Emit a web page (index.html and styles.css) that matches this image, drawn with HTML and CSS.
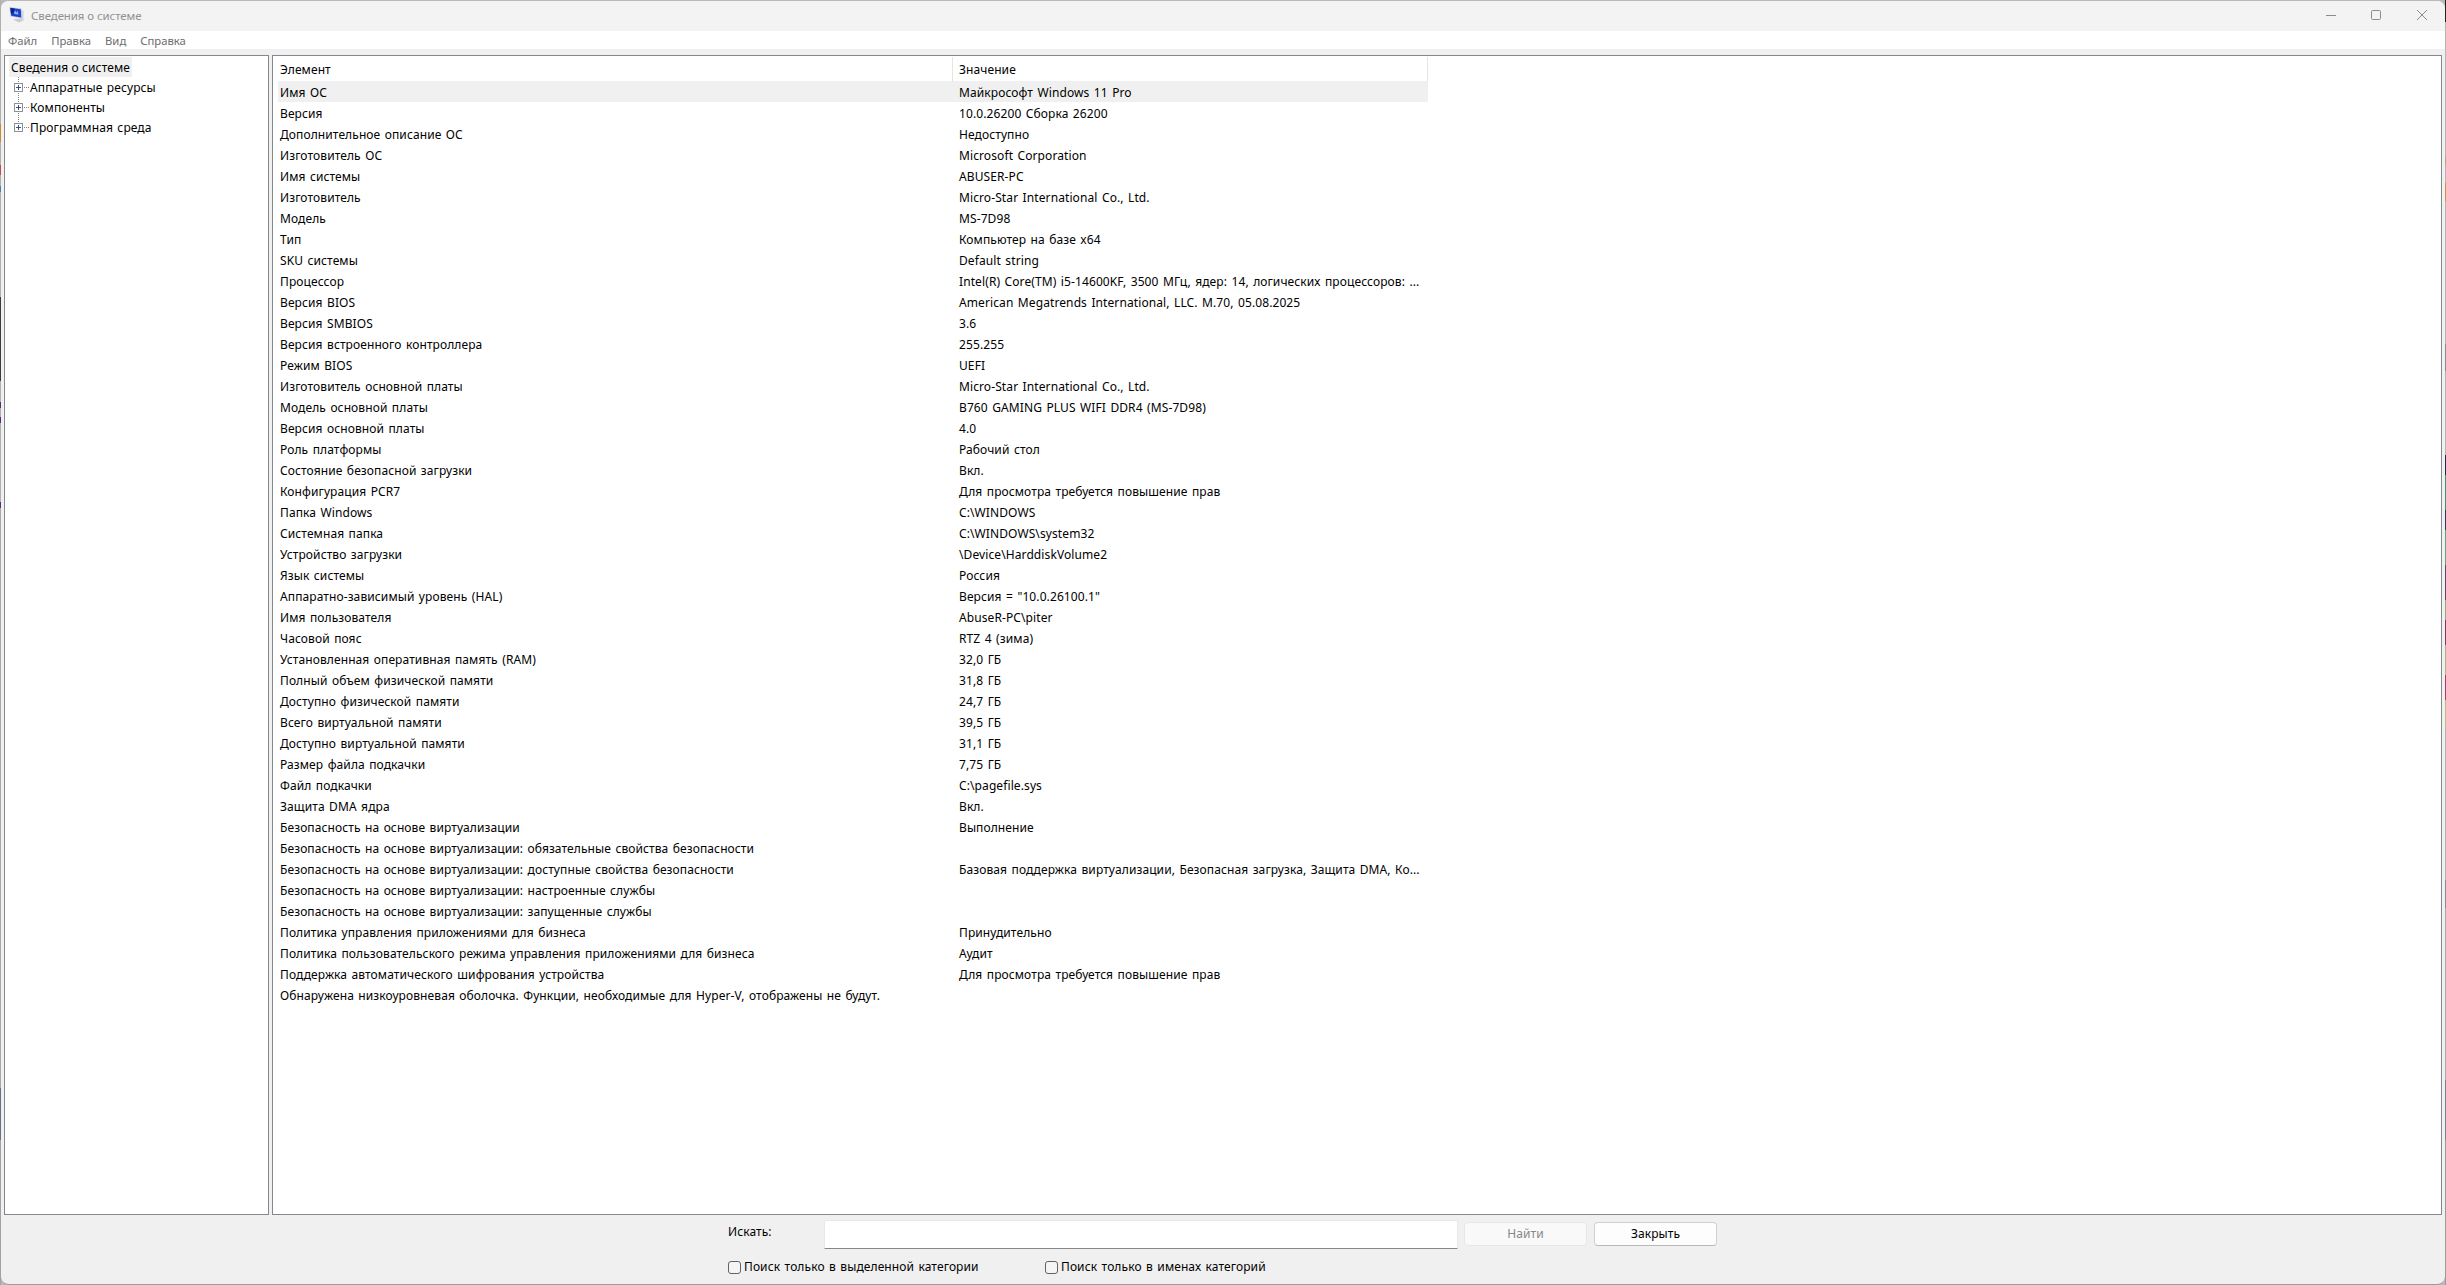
FILE: index.html
```html
<!DOCTYPE html>
<html lang="ru">
<head>
<meta charset="utf-8">
<title>Сведения о системе</title>
<link rel="stylesheet" href="styles.css">
</head>
<body>
<div class="edge edge-left"></div>
<div class="window">
  <header class="titlebar">
    <svg class="app-icon" width="16" height="16" viewBox="0 0 16 16"><path d="M4 12.500l7-1 4 1.500-5 2.500z" fill="#c9ccd0"/><path d="M12 3l2.500 1v9l-3-1z" fill="#d0d3da"/><path d="M.5 0l12 1.500.5 10L1.500 9.500z" fill="#c5cbe0"/><path d="M1.200.7l10.600 1.500.4 8.300-10-1.800z" fill="#1c43cc"/><path d="M1.500 1l4 .8.500 3.200-4 2z" fill="#082684"/><path d="M5 6l1-3 1.300 3 1-2.500L9.500 7.500 6 7z" fill="#9db4f7"/></svg>
    <span class="title">Сведения о системе</span>
    <div class="controls">
      <svg width="12" height="12" viewBox="0 0 12 12"><path d="M2 6.500h10"/></svg>
      <svg width="12" height="12" viewBox="0 0 12 12"><rect x="1.500" y="1.500" width="9" height="9" rx="1"/></svg>
      <svg width="12" height="12" viewBox="0 0 12 12"><path d="M1 1l10 10M11 1L1 11"/></svg>
    </div>
  </header>
  <nav class="menubar"><span>Файл</span><span>Правка</span><span>Вид</span><span>Справка</span></nav>
  <main class="panes">
    <aside class="tree">
      <div class="root"><span>Сведения о системе</span></div>
      <ul>
        <li><svg width="16" height="20" viewBox="0 0 16 20"><path class="dots" d="M4.500 0v6M4.500 16v4M10 10.500h5"/><rect x=".5" y="6.500" width="8" height="8"/><path class="plus" d="M2 10.500h5M4.500 8v5"/></svg><span>Аппаратные ресурсы</span></li>
        <li><svg width="16" height="20" viewBox="0 0 16 20"><path class="dots" d="M4.500 0v6M4.500 16v4M10 10.500h5"/><rect x=".5" y="6.500" width="8" height="8"/><path class="plus" d="M2 10.500h5M4.500 8v5"/></svg><span>Компоненты</span></li>
        <li><svg width="16" height="20" viewBox="0 0 16 20"><path class="dots" d="M4.500 0v6M10 10.500h5"/><rect x=".5" y="6.500" width="8" height="8"/><path class="plus" d="M2 10.500h5M4.500 8v5"/></svg><span>Программная среда</span></li>
      </ul>
    </aside>
    <section class="list">
      <div class="row head"><span>Элемент</span><span>Значение</span></div>
      <div class="row selected"><span>Имя ОС</span><span>Майкрософт Windows 11 Pro</span></div>
      <div class="row"><span>Версия</span><span>10.0.26200 Сборка 26200</span></div>
      <div class="row"><span>Дополнительное описание ОС</span><span>Недоступно</span></div>
      <div class="row"><span>Изготовитель ОС</span><span>Microsoft Corporation</span></div>
      <div class="row"><span>Имя системы</span><span>ABUSER-PC</span></div>
      <div class="row"><span>Изготовитель</span><span>Micro-Star International Co., Ltd.</span></div>
      <div class="row"><span>Модель</span><span>MS-7D98</span></div>
      <div class="row"><span>Тип</span><span>Компьютер на базе x64</span></div>
      <div class="row"><span>SKU системы</span><span>Default string</span></div>
      <div class="row"><span>Процессор</span><span>Intel(R) Core(TM) i5-14600KF, 3500 МГц, ядер: 14, логических процессоров: ...</span></div>
      <div class="row"><span>Версия BIOS</span><span>American Megatrends International, LLC. M.70, 05.08.2025</span></div>
      <div class="row"><span>Версия SMBIOS</span><span>3.6</span></div>
      <div class="row"><span>Версия встроенного контроллера</span><span>255.255</span></div>
      <div class="row"><span>Режим BIOS</span><span>UEFI</span></div>
      <div class="row"><span>Изготовитель основной платы</span><span>Micro-Star International Co., Ltd.</span></div>
      <div class="row"><span>Модель основной платы</span><span>B760 GAMING PLUS WIFI DDR4 (MS-7D98)</span></div>
      <div class="row"><span>Версия основной платы</span><span>4.0</span></div>
      <div class="row"><span>Роль платформы</span><span>Рабочий стол</span></div>
      <div class="row"><span>Состояние безопасной загрузки</span><span>Вкл.</span></div>
      <div class="row"><span>Конфигурация PCR7</span><span>Для просмотра требуется повышение прав</span></div>
      <div class="row"><span>Папка Windows</span><span>C:\WINDOWS</span></div>
      <div class="row"><span>Системная папка</span><span>C:\WINDOWS\system32</span></div>
      <div class="row"><span>Устройство загрузки</span><span>\Device\HarddiskVolume2</span></div>
      <div class="row"><span>Язык системы</span><span>Россия</span></div>
      <div class="row"><span>Аппаратно-зависимый уровень (HAL)</span><span>Версия = "10.0.26100.1"</span></div>
      <div class="row"><span>Имя пользователя</span><span>AbuseR-PC\piter</span></div>
      <div class="row"><span>Часовой пояс</span><span>RTZ 4 (зима)</span></div>
      <div class="row"><span>Установленная оперативная память (RAM)</span><span>32,0 ГБ</span></div>
      <div class="row"><span>Полный объем физической памяти</span><span>31,8 ГБ</span></div>
      <div class="row"><span>Доступно физической памяти</span><span>24,7 ГБ</span></div>
      <div class="row"><span>Всего виртуальной памяти</span><span>39,5 ГБ</span></div>
      <div class="row"><span>Доступно виртуальной памяти</span><span>31,1 ГБ</span></div>
      <div class="row"><span>Размер файла подкачки</span><span>7,75 ГБ</span></div>
      <div class="row"><span>Файл подкачки</span><span>C:\pagefile.sys</span></div>
      <div class="row"><span>Защита DMA ядра</span><span>Вкл.</span></div>
      <div class="row"><span>Безопасность на основе виртуализации</span><span>Выполнение</span></div>
      <div class="row"><span>Безопасность на основе виртуализации: обязательные свойства безопасности</span></div>
      <div class="row"><span>Безопасность на основе виртуализации: доступные свойства безопасности</span><span>Базовая поддержка виртуализации, Безопасная загрузка, Защита DMA, Ко...</span></div>
      <div class="row"><span>Безопасность на основе виртуализации: настроенные службы</span></div>
      <div class="row"><span>Безопасность на основе виртуализации: запущенные службы</span></div>
      <div class="row"><span>Политика управления приложениями для бизнеса</span><span>Принудительно</span></div>
      <div class="row"><span>Политика пользовательского режима управления приложениями для бизнеса</span><span>Аудит</span></div>
      <div class="row"><span>Поддержка автоматического шифрования устройства</span><span>Для просмотра требуется повышение прав</span></div>
      <div class="row"><span>Обнаружена низкоуровневая оболочка. Функции, необходимые для Hyper-V, отображены не будут.</span></div>
    </section>
  </main>
  <footer class="search">
    <div class="find"><label for="q">Искать:</label><input id="q" type="text"><button class="off" disabled>Найти</button><button>Закрыть</button></div>
    <div class="options"><label><i class="check"></i>Поиск только в выделенной категории</label><label><i class="check"></i>Поиск только в именах категорий</label></div>
  </footer>
</div>
<div class="edge edge-right"></div>
</body>
</html>
```
FILE: styles.css
```css
* { box-sizing: border-box; }
body { margin: 0; width: 2446px; height: 1285px; display: grid; grid-template-columns: 1px 2444px 1px; background: #b9b9bb; font: 12px/21px "Noto Sans", sans-serif; word-spacing: 1.2px; letter-spacing: .1px; color: #000; overflow: hidden; }
.edge-left { background: linear-gradient(#b0b0b2 0 124px, #c78a2c 124px 142px, #b0b0b2 142px 165px, #c24a50 165px 175px, #b0b0b2 175px 186px, #4a86a2 186px 192px, #b0b0b2 192px 297px, #3c393f 297px 381px, #b0b0b2 381px 402px, #5b2a72 402px 408px, #b0b0b2 408px 417px, #5b2a72 417px 423px, #b0b0b2 423px 502px, #5b2a72 502px 508px, #a9a9ad 508px 1088px, #686f86 1088px 1140px, #a2a2a5 1140px); }
.edge-right { background: linear-gradient(#222 0 22px, #b4b4b4 22px 157px, #c29d7c 157px 165px, #b4b4b4 165px 183px, #c79540 183px 201px, #b4b4b4 201px 344px, #868b9b 344px 371px, #b4b4b4 371px 455px, #262657 455px 475px, #3c9277 475px 510px, #393165 510px 530px, #62a482 530px 565px, #69406e 565px 600px, #91a87c 600px 620px, #8a346b 620px 645px, #aeb17c 645px 675px, #b33870 675px 700px, #bcbb80 700px 730px, #b0b0b0 730px 880px, #868b9b 880px 908px, #aaa 908px 1080px, #7b819c 1080px 1140px, #9a9a9a 1140px); }
.window { height: 1285px; display: flex; flex-direction: column; background: #f0f0f0; border: solid; border-width: 1px 0; border-color: #b9b9b9 #b9b9b9 #9b9b9b; border-radius: 8px; overflow: hidden; white-space: nowrap; }
.titlebar { height: 30px; flex: none; display: flex; align-items: center; padding: 0 17px 2px 8px; background: #f3f3f3; color: #919191; font-size: 11.4px; word-spacing: 0; letter-spacing: -.04px; }
.app-icon { margin-right: 6px; }
.controls { margin-left: auto; display: flex; gap: 34px; }
.controls svg { fill: none; stroke: #8b8b8b; }
.menubar { height: 18px; flex: none; display: flex; gap: 14px; padding-left: 7px; font-size: 11.3px; line-height: 19px; background: #fff; color: #6d6d6d; letter-spacing: 0; }
.panes { height: 1160px; margin: 6px 3px 0; flex: none; display: grid; grid-template-columns: 265px 1fr; gap: 3px; }
.tree, .list { background: #fff; border: 1px solid #828790; }
.tree { padding: 1px 4px; line-height: 22px; }
.root { height: 20px; }
.root span { display: inline-block; height: 20px; padding: 0 2px; background: #f0f0f0; word-spacing: 0; }
.tree ul { list-style: none; margin: 0; padding: 0 0 0 5px; }
.tree li { display: flex; height: 20px; }
.tree svg { flex: none; fill: #fff; stroke: #919191; }
.tree .dots { stroke: #808080; stroke-dasharray: 1 1; }
.tree .plus { stroke: #34508f; }
.list { padding: 1px 5px; }
.row { width: 1150px; height: 21px; line-height: 23px; display: grid; grid-template-columns: 674px 1fr; padding-left: 2px; }
.row span + span { padding-left: 5px; }
.head { height: 24px; line-height: 25px; border-right: 1px solid #e5e5e5; }
.head span + span { border-left: 1px solid #e5e5e5; padding-left: 6px; margin-left: -2px; }
.selected { background: #f0f0f0; }
.find { display: flex; margin-left: 727px; padding-top: 5px; height: 34px; }
.find label { width: 96px; padding-top: 1px; }
.find input { width: 634px; height: 29px; background: #fff; border: 1px solid #e8e8e8; border-bottom-color: #868686; border-radius: 2px 2px 0 0; }
button { font: inherit; line-height: 20px; letter-spacing: inherit; word-spacing: inherit; color: #000; width: 123px; height: 24px; margin: 2px 0 0 7px; padding: 0; border: 1px solid #d0d0d0; border-bottom-color: #b9b9b9; border-radius: 4px; background: #fdfdfd; }
.off { margin-left: 6px; color: #878787; background: #f9f9f9; border-color: #e7e7e7; }
.options { display: flex; margin: 7px 0 0 727px; }
.options label { width: 317px; display: flex; align-items: center; line-height: 22px; }
.check { width: 13px; height: 13px; border: 1px solid #626262; border-radius: 3px; margin-right: 3px; background: #f5f5f5; }
```
